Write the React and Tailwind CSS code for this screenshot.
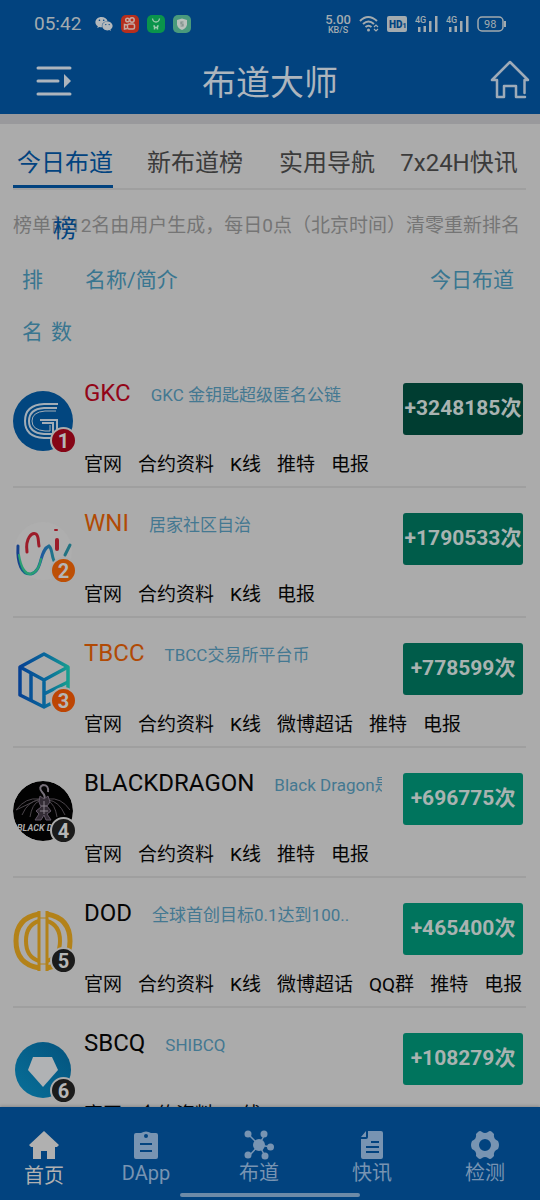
import React, { useState } from 'react';
import { FaWeixin } from 'react-icons/fa';

const TABS = ['今日布道榜', '新布道榜', '实用导航', '7x24H快讯'];

const COINS = [
  {
    name: 'GKC',
    desc: 'GKC 金钥匙超级匿名公链',
    votes: 3248185,
    nameColor: 'text-[#930518]',
    badge: 'bg-[#850516]',
    button: 'bg-[#003d31]',
    links: ['官网', '合约资料', 'K线', '推特', '电报'],
  },
  {
    name: 'WNI',
    desc: '居家社区自治',
    votes: 1790533,
    nameColor: 'text-[#b14a05]',
    badge: 'bg-[#bd4f05]',
    button: 'bg-[#005c4a]',
    links: ['官网', '合约资料', 'K线', '电报'],
  },
  {
    name: 'TBCC',
    desc: 'TBCC交易所平台币',
    votes: 778599,
    nameColor: 'text-[#b14a05]',
    badge: 'bg-[#bd4503]',
    button: 'bg-[#005c4a]',
    links: ['官网', '合约资料', 'K线', '微博超话', '推特', '电报'],
  },
  {
    name: 'BLACKDRAGON',
    desc: 'Black Dragon是',
    votes: 696775,
    nameColor: 'text-[#050505]',
    badge: 'bg-[#1b1b1b]',
    button: 'bg-[#00745d]',
    links: ['官网', '合约资料', 'K线', '推特', '电报'],
  },
  {
    name: 'DOD',
    desc: '全球首创目标0.1达到100..',
    votes: 465400,
    nameColor: 'text-[#050505]',
    badge: 'bg-[#1b1b1b]',
    button: 'bg-[#00745d]',
    links: ['官网', '合约资料', 'K线', '微博超话', 'QQ群', '推特', '电报'],
  },
  {
    name: 'SBCQ',
    desc: 'SHIBCQ',
    votes: 108279,
    nameColor: 'text-[#050505]',
    badge: 'bg-[#1b1b1b]',
    button: 'bg-[#00745d]',
    links: ['官网', '合约资料', 'K线'],
  },
];

// 币种图标
const GkcLogo = () => (
  <svg viewBox="0 0 60 60" className="size-full">
    <circle cx="30" cy="30" r="30" fill="#02467f" />
    <g fill="none" stroke="#a3adb6">
      <path d="M45 13H31Q12 14 12 30Q12 46 31 47H44V29H27" strokeWidth="2" />
      <path d="M44 17H31Q16 18 16 30Q16 42 31 43H40V32H29" strokeWidth="2" />
      <path d="M43 20H32Q19 21 19 30Q19 39 32 40H37V34" strokeWidth="1" />
    </g>
  </svg>
);

const WniLogo = () => (
  <svg viewBox="0 0 60 60" className="size-full" fill="none" strokeLinecap="round">
    <defs>
      <linearGradient id="wni" x1="0" x2="1" y1="0" y2="0">
        <stop offset="0" stopColor="#163f8c" />
        <stop offset="0.3" stopColor="#168d86" />
        <stop offset="0.6" stopColor="#1f58a0" />
        <stop offset="1" stopColor="#217b84" />
      </linearGradient>
    </defs>
    <circle cx="30" cy="30" r="29" fill="#aeaeae" />
    <path d="M5 25C4 43 9 54 18 53C30 50 26 29 36 25C40 28 38 38 43 43" stroke="url(#wni)" strokeWidth="3" />
    <path d="M6 34C8 46 11 53 18 53C25 51 27 44 28 38" stroke="#2b9f72" strokeWidth="2" />
    <path d="M57 24L52 34" stroke="#227382" strokeWidth="3" />
    <path d="M14 31C12 17 19 11 23 13C26 15 25 20 26 25" stroke="#9c1c29" strokeWidth="3" />
    <path d="M44 19V28" stroke="#9c1c29" strokeWidth="4" />
    <path d="M42 9H44" stroke="#9c1c29" strokeWidth="2" />
  </svg>
);

const TbccLogo = () => (
  <svg viewBox="0 0 60 60" className="size-full" fill="none">
    <defs>
      <linearGradient id="tbcc" gradientUnits="userSpaceOnUse" x1="5" x2="56" y1="30" y2="30">
        <stop offset="0" stopColor="#073f92" />
        <stop offset="0.55" stopColor="#08689c" />
        <stop offset="1" stopColor="#18a08f" />
      </linearGradient>
    </defs>
    <g stroke="url(#tbcc)" strokeWidth="3.5" strokeLinejoin="round">
      <path d="M31 3L55 16V44L31 56L7 44V16Z" />
      <path d="M7 16L31 29L55 16M31 29V56M18 22V50M31 43L55 31" />
    </g>
  </svg>
);

const DragonLogo = () => (
  <svg viewBox="0 0 60 60" className="size-full">
    <defs>
      <clipPath id="dragon">
        <circle cx="30" cy="30" r="30" />
      </clipPath>
    </defs>
    <g clipPath="url(#dragon)">
      <circle cx="30" cy="30" r="30" fill="#020202" />
      <g fill="none" stroke="#4b454b" strokeWidth="1">
        <path d="M26 18Q13 16 3 29M26 19Q15 20 9 34M26 20Q19 23 17 36M26 18L3 29M35 18Q48 16 57 29M35 19Q46 20 52 34M35 20Q42 23 44 36" />
        <path d="M35 11Q36 4 30 4Q25 6 29 11Q33 15 31 19" stroke="#77707a" strokeWidth="2" />
        <path d="M27 15L31 18L35 15L37 21L34 25L38 30L34 33L38 39H33L31 34L28 39H22L26 33L23 30L28 26L26 21Z" fill="#332c35" stroke="#625766" />
        <path d="M31 20V33M28 25H34M27 30H35" stroke="#8a828c" />
      </g>
      <text x="4" y="50" fill="#aaaaaa" fontSize="9" fontWeight="700" fontStyle="italic" fontFamily="Roboto, sans-serif">
        BLACK DR
      </text>
    </g>
  </svg>
);

const DodLogo = () => (
  <svg viewBox="0 0 60 60" className="size-full">
    <g fill="none" stroke="#b38219">
      <path d="M26 3Q3 7 3 30Q3 53 26 57" strokeWidth="5" />
      <path d="M34 3Q57 7 57 30Q57 53 34 57" strokeWidth="5" />
      <path d="M26 10Q13 14 13 30Q13 46 26 50" strokeWidth="4" />
      <path d="M34 10Q47 14 47 30Q47 46 34 50" strokeWidth="4" />
      <path d="M26 0V60M34 0V60" strokeWidth="3" />
      <path d="M27 7H33M27 53H33" strokeWidth="1" />
    </g>
  </svg>
);

const SbcqLogo = () => (
  <svg viewBox="0 0 60 60" className="size-full">
    <defs>
      <linearGradient id="sbcq" x1="0" x2="1" y1="1" y2="0">
        <stop offset="0" stopColor="#087099" />
        <stop offset="1" stopColor="#03527d" />
      </linearGradient>
    </defs>
    <circle cx="30" cy="29" r="28" fill="url(#sbcq)" />
    <path d="M20 16H39L45 29L30 46L15 29Z" fill="#b0b2b4" />
  </svg>
);

const LOGOS = [GkcLogo, WniLogo, TbccLogo, DragonLogo, DodLogo, SbcqLogo];

const Signal = () => (
  <svg viewBox="0 0 23 18" className="h-[18px] w-[23px]" fill="#a3abaf">
    <text x="0" y="8" fontSize="9" fontWeight="500" fontFamily="Roboto, sans-serif">4G</text>
    <path d="M3 12h2.5v5H3zM8.500 11h2.500v6H8.500zM14 6h2.500v11h-2.500zM20 1h2.500v16h-2.500z" />
  </svg>
);

const StatusBar = () => (
  <div className="flex h-12 items-center justify-between pr-[33px] pl-[34px] text-[#a3abaf]">
    <div className="flex items-center">
      <span className="mr-[14px] text-[19px] leading-6">05:42</span>
      <FaWeixin className="mr-2 size-[18px] text-[#b4b8bb]" />
      <svg viewBox="0 0 18 18" className="mr-2 size-[18px]">
        <rect width="18" height="18" rx="5" fill="#b62e1c" />
        <g fill="none" stroke="#c4aaa2" strokeWidth="1.5">
          <circle cx="6.5" cy="5" r="1.8" />
          <circle cx="11" cy="5" r="2.2" />
          <rect x="6.5" y="9" width="7" height="5" rx="1.5" />
          <path d="M6 10L3.5 9.5V14L6 13.5" />
        </g>
      </svg>
      <svg viewBox="0 0 18 18" className="mr-2 size-[18px]" fill="none" stroke="#9ccaae">
        <rect width="18" height="18" rx="5" fill="#0a944b" stroke="none" />
        <path d="M5.500 3.500Q6 7 9 7T12.500 3.500" strokeWidth="1.3" />
        <path d="M6.500 10.500Q8 11 7.500 14.500M11.500 10.500Q10 11 10.500 14.500M7 12.500H11" strokeWidth="1.5" />
      </svg>
      <svg viewBox="0 0 18 18" className="size-[18px]">
        <rect width="18" height="18" rx="5" fill="#4a9a7c" />
        <path d="M9 3.500L14 5V9.500Q13.500 13 9 15Q4.500 13 4 9.500V5Z" fill="#b9c0bb" />
        <path d="M10.500 7H8V9H10V11H7.500" fill="none" stroke="#7c8c87" strokeWidth="1.2" />
      </svg>
    </div>
    <div className="flex items-center gap-2">
      <div className="flex flex-col items-center font-medium">
        <span className="text-[13px] leading-[13px]">5.00</span>
        <span className="text-[9px] leading-[9px]">KB/S</span>
      </div>
      <svg viewBox="0 0 20 18" className="h-[18px] w-5" fill="none" stroke="#a3abaf" strokeWidth="2">
        <path d="M1 6Q9 -2 18 6M4 9Q9.500 4 15 9M6.500 12Q9.500 9.500 12.500 12" />
        <circle cx="9.500" cy="15" r="1.500" fill="#a3abaf" stroke="none" />
        <path d="M15 12L17 10L19 12M15 14L17 16L19 14" strokeWidth="1.2" />
      </svg>
      <svg viewBox="0 0 20 16" className="h-4 w-5">
        <rect width="20" height="16" rx="2" fill="#a3abaf" />
        <text x="2" y="12" fontSize="10" fontWeight="900" fill="#02437f" fontFamily="Roboto, sans-serif">
          HD<tspan fontSize="7">1</tspan>
        </text>
      </svg>
      <Signal />
      <Signal />
      <svg viewBox="0 0 30 16" className="h-4 w-[30px]">
        <rect x="1" y="1" width="25" height="14" rx="4" fill="none" stroke="#a3abaf" strokeWidth="1.5" />
        <path d="M28 5V11" stroke="#a3abaf" strokeWidth="2" />
        <text x="7" y="12" fontSize="11" fill="#a3abaf" fontFamily="Roboto, sans-serif">98</text>
      </svg>
    </div>
  </div>
);

const Header = () => (
  <header className="shrink-0 bg-[#02437f] pb-1">
    <StatusBar />
    <div className="grid h-[62px] grid-cols-[1fr_auto_1fr] items-center px-[10px]">
      <button type="button" aria-label="菜单" className="justify-self-start pt-1 pl-[26px]">
        <svg viewBox="0 0 36 32" className="h-8 w-9" stroke="#adb5bd" strokeWidth="3" strokeLinecap="round">
          <path d="M2 3H34M2 16H22M2 29H34" />
          <path d="M28 9L35 16L28 23Z" fill="#adb5bd" stroke="none" />
        </svg>
      </button>
      <h1 className="pt-2 text-[34px] leading-[44px] text-[#adb5bd]">布道大师</h1>
      <a href="#home" aria-label="主页" className="justify-self-end">
        <svg viewBox="0 0 40 40" className="size-10" fill="none" stroke="#9eabb8" strokeWidth="2.5">
          <path d="M34.500 34V21H38L20 3L2 21H7V38H14V27H26V38H35" strokeLinejoin="round" strokeLinecap="round" />
        </svg>
      </a>
    </div>
  </header>
);

const CoinRow = ({ coin, rank, Logo }) => (
  <li className="flex h-[130px] border-b-2 border-[#9f9f9f] pt-[21px]">
    <div className="relative mt-3 size-[60px] shrink-0">
      <Logo />
      <span
        className={`absolute -right-1 -bottom-[3px] flex size-[27px] items-center justify-center rounded-full border-2 border-[#ababab] text-[20px] leading-none font-bold text-[#b6b6b6] ${coin.badge}`}
      >
        {rank}
      </span>
    </div>
    <div className="ml-[11px] min-w-0 flex-1">
      <div className="flex h-14 justify-between">
        <div className="mr-[21px] flex min-w-0 flex-1 items-start gap-5 overflow-hidden whitespace-nowrap">
          <h2 className={`text-[24px] leading-[28px] ${coin.nameColor}`}>{coin.name}</h2>
          <p className="text-[17px] leading-[32px] text-[#447891]">{coin.desc}</p>
        </div>
        <button
          type="button"
          className={`mt-1 mr-[3px] h-[52px] w-[120px] shrink-0 rounded-[3px] text-[21px] font-bold whitespace-nowrap text-[#a9b3b1] ${coin.button}`}
        >
          +{coin.votes}次
        </button>
      </div>
      <div className="mt-4 flex gap-4 whitespace-nowrap">
        {coin.links.map((link) => (
          <a key={link} href="#link" className="text-[19px] leading-7 text-[#050505]">
            {link}
          </a>
        ))}
      </div>
    </div>
  </li>
);

// 底部导航图标
const NAV = [
  {
    label: '首页',
    icon: <path d="M14 0L29 14L27 16H25V28H17V20H11V28H3V16H1L-1 14Z" />,
  },
  {
    label: 'DApp',
    icon: (
      <path
        fillRule="evenodd"
        d="M4 2H9Q14 -1 19 2H24Q26 2 26 4V26Q26 28 24 28H4Q2 28 2 26V4Q2 2 4 2ZM14 3A2 2 0 1 0 14 7A2 2 0 1 0 14 3ZM8 12V14H20V12ZM8 19V21H20V19Z"
      />
    ),
  },
  {
    label: '布道',
    icon: (
      <>
        <path d="M14 14L4 4M14 14L20 3M14 14L26 16M14 14L4 25M14 14L20 25" stroke="currentColor" strokeWidth="1.5" />
        <circle cx="14" cy="14" r="6" />
        <circle cx="3" cy="3" r="3.5" />
        <circle cx="19" cy="3" r="3.5" />
        <circle cx="25.5" cy="16" r="3.5" />
        <circle cx="3" cy="24" r="3.5" />
        <circle cx="20" cy="25" r="3.5" />
      </>
    ),
  },
  {
    label: '快讯',
    icon: (
      <path
        fillRule="evenodd"
        d="M10 0H23Q25 0 25 2V26Q25 28 23 28H5Q3 28 3 26V8H8Q10 8 10 6ZM8 0V6H3ZM13 10V12H21V10ZM8 15V17H21V15ZM8 20V22H21V20Z"
      />
    ),
  },
  {
    label: '检测',
    icon: (
      <path
        fillRule="evenodd"
        d="M7 1Q9 -1 11 1Q14 3 17 1Q19 -1 21 1L23 3Q22 8 27 10Q29 14 27 18Q22 20 23 25L21 27Q19 29 17 27Q14 25 11 27Q9 29 7 27L5 25Q6 20 1 18Q-1 14 1 10Q6 8 5 3ZM14 8A6 6 0 1 0 14 20A6 6 0 1 0 14 8Z"
      />
    ),
  },
];

const BottomNav = () => (
  <nav className="shrink-0 bg-[#02437f] shadow-[0_-1px_3px_rgba(0,0,0,0.2)]">
    <div className="grid h-[86px] grid-cols-[88px_1fr_1fr_1fr_1fr] pt-[23px]">
      {NAV.map((item, i) => (
        <a
          key={item.label}
          href="#nav"
          className={`flex flex-col items-center text-[20px] leading-[26px] ${i === 0 ? 'gap-[3px] text-[#b0b0b0]' : 'pl-[3px] text-[#7894b2]'}`}
        >
          <svg viewBox="-1 -1 30 30" className="size-[30px]" fill="currentColor">
            {item.icon}
          </svg>
          <span>{item.label}</span>
        </a>
      ))}
    </div>
    <div className="mx-auto mb-[3px] h-1 w-1/3 rounded-full bg-[#6d8ba8]" />
  </nav>
);

const App = () => {
  const [active, setActive] = useState(0);

  return (
    <div className="flex h-dvh flex-col bg-[#ababab] font-['Roboto','Noto_Sans_CJK_SC',sans-serif]">
      <Header />
      <main className="min-h-0 flex-1 overflow-y-auto border-t-[10px] border-[#99999c] [scrollbar-width:none]">
        <div className="relative z-10 mr-[14px] ml-[13px] h-[66px] border-b-2 border-[#9f9f9f] pt-[6px]">
          <div className="grid h-[58px] grid-cols-4 gap-8 pr-[17px]">
            {TABS.map((tab, i) => (
              <button
                key={tab}
                type="button"
                onClick={() => setActive(i)}
                className={`flex h-[58px] items-start justify-center border-b-[3px] text-[24px] leading-[66px] ${
                  active === i ? 'border-[#02437f] text-[#02437f]' : 'border-transparent text-[#3b3b3b]'
                }`}
              >
                {/* 第一个标签宽度不够，最后一个字会换行 */}
                {i === 0 ? <span className="ml-1 w-24 shrink-0">{tab}</span> : <span className="whitespace-nowrap">{tab}</span>}
              </button>
            ))}
          </div>
        </div>

        <p className="mt-5 ml-[13px] text-[19px] leading-8 whitespace-nowrap text-[#757575]">
          榜单前12名由用户生成，每日0点（北京时间）清零重新排名
        </p>

        <div className="mt-3 pr-[26px] pl-[22px] text-[21px] leading-[52px] text-[#397690]">
          <div className="flex">
            <span className="w-[63px]">排</span>
            <span className="flex-1">名称/简介</span>
            <span>今日布道</span>
          </div>
          <div className="flex gap-2">
            <span>名</span>
            <span>数</span>
          </div>
        </div>

        <ul className="mr-[14px] ml-[13px]">
          {COINS.map((coin, i) => (
            <CoinRow key={coin.name} coin={coin} rank={i + 1} Logo={LOGOS[i]} />
          ))}
        </ul>
      </main>
      <BottomNav />
    </div>
  );
};

export default App;
